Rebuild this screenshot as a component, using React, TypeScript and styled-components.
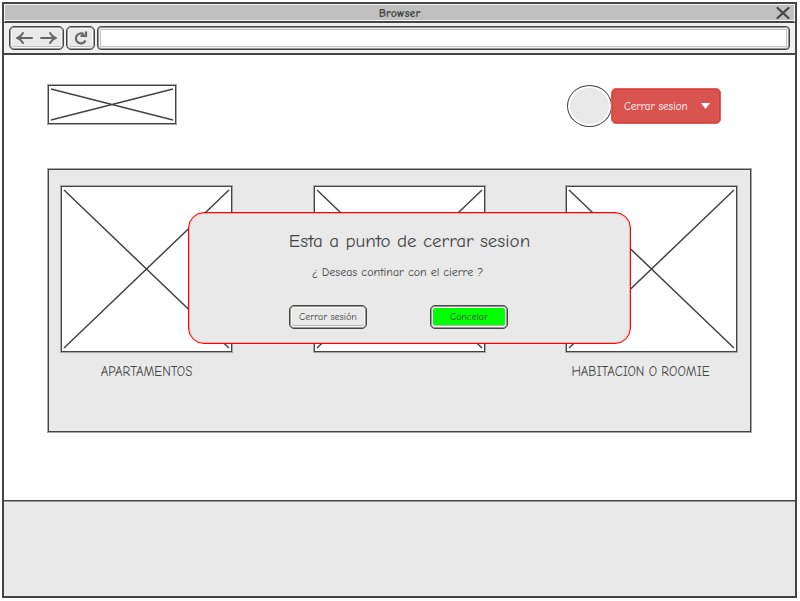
import React from "react";
import styled, { createGlobalStyle } from "styled-components";

const ink = "#444444";
const fill = "#e9e9e9";

const GlobalStyle = createGlobalStyle`
  *, *::before, *::after { box-sizing: border-box; }
  body { margin: 0; background: #ffffff; }
  body, button, input, select {
    font-family: "Comic Sans MS", "Comic Neue", "Noto Sans", sans-serif;
    color: ${ink};
  }
`;

const Frame = styled.div`
  display: flex;
  flex-direction: column;
  min-height: calc(100vh - 5px);
  margin: 2px 3px 3px 2px;
  border: 2px solid ${ink};
  background: #ffffff;
`;

const TitleBar = styled.header`
  display: grid;
  grid-template-columns: 20px 1fr 20px;
  align-items: center;
  height: 19px;
  border: 1px solid #f2f2f2;
  border-bottom: 2px solid ${ink};
  background: #c0c0c0;
  box-shadow: inset 0 -1px #f2f2f2;
`;

const WindowTitle = styled.h1`
  grid-column: 2;
  margin: 0;
  font-size: 12px;
  line-height: 16px;
  font-weight: 600;
  text-align: center;
`;

const CloseButton = styled.button`
  display: flex;
  padding: 0 0 0 2px;
  border: 0;
  background: none;
`;

const Toolbar = styled.nav`
  display: flex;
  align-items: center;
  gap: 2px;
  height: 32px;
  padding: 0 5px;
  border-bottom: 2px solid ${ink};
  background: #f0f0f0;
`;

const ToolGroup = styled.div<{ $width: number }>`
  display: flex;
  align-items: center;
  justify-content: space-evenly;
  width: ${(p) => p.$width}px;
  height: 24px;
  border: 1px solid ${ink};
  border-radius: 5px;
  background: ${fill};
  box-shadow: inset 0 0 0 1px #999999, inset 0 0 0 2px #f8f8f8, inset 0 -3px #bdbdbd;
`;

const ToolButton = styled.button`
  display: flex;
  padding: 0;
  border: 0;
  background: none;
`;

const Address = styled.input`
  flex: 1;
  min-width: 0;
  height: 24px;
  padding: 0 8px;
  border: 1px solid ${ink};
  border-radius: 4px;
  outline: 0;
  background: #ffffff;
  box-shadow: inset 0 0 0 1px #999999, inset 0 0 0 2px #eeeeee, inset 0 0 0 3px #c4c4c4;
  font-size: 12px;
`;

const Page = styled.main`
  flex: 1;
  padding: 30px 44px 68px;
`;

const PageHeader = styled.div`
  display: flex;
  align-items: flex-start;
  justify-content: space-between;
  padding-right: 30px;
`;

const Placeholder = styled.svg<{ $width: number; $height: number }>`
  display: block;
  width: ${(p) => p.$width}px;
  height: ${(p) => p.$height}px;
  border: 1px solid ${ink};
  outline: 1px solid #a8a8a8;
  background: #ffffff;
`;

const Account = styled.div`
  display: flex;
  align-items: center;
`;

const Avatar = styled.div`
  width: 45px;
  height: 42px;
  border: 1px solid ${ink};
  border-radius: 50%;
  background: ${fill};
  box-shadow: inset 0 0 0 2px #ffffff;
`;

const MenuField = styled.label`
  display: grid;
  align-items: center;
  width: 110px;
  height: 36px;
  margin-left: -1px;
`;

const MenuSelect = styled.select`
  grid-area: 1 / 1;
  appearance: none;
  width: 100%;
  height: 100%;
  padding: 0 24px 0 12px;
  border: 1px solid #e4605b;
  border-radius: 5px;
  background: #d9534f;
  box-shadow: inset 0 0 0 1px #d43f3a;
  color: #ffffff;
  font-size: 11px;
`;

const MenuArrow = styled.svg`
  grid-area: 1 / 1;
  justify-self: end;
  margin-right: 11px;
  pointer-events: none;
`;

const Panel = styled.section`
  position: relative;
  display: flex;
  justify-content: space-between;
  min-height: 263px;
  margin-top: 42px;
  padding: 16px 13px 48px 12px;
  border: 1px solid ${ink};
  outline: 1px solid #a8a8a8;
  background: ${fill};
`;

const Card = styled.figure`
  margin: 0;
`;

const Caption = styled.figcaption<{ $shift?: number }>`
  padding-right: ${(p) => p.$shift ?? 0}px;
  margin-top: 12px;
  font-size: 13px;
  line-height: 16px;
  text-align: center;
  white-space: nowrap;
`;

const Dialog = styled.div`
  position: absolute;
  top: 42px;
  left: 139px;
  right: 119px;
  display: flex;
  flex-direction: column;
  align-items: center;
  height: 132px;
  padding-top: 12px;
  border: 1px solid #ff0000;
  box-shadow: inset 0 0 0 1px #ff000040;
  border-radius: 16px;
  background: ${fill};
`;

const DialogTitle = styled.h2`
  margin: 0;
  font-size: 19px;
  line-height: 32px;
  font-weight: 400;
`;

const DialogText = styled.p`
  margin: 6px 24px 0 0;
  font-size: 12px;
  line-height: 18px;
`;

const DialogActions = styled.div`
  display: flex;
  gap: 63px;
  margin: 24px 22px 0 0;
`;

const ActionButton = styled.button<{ $primary?: boolean }>`
  width: 78px;
  height: 24px;
  padding: 0;
  border: 1px solid ${ink};
  border-radius: 5px;
  background: ${(p) => (p.$primary ? "#00ff00" : fill)};
  box-shadow: inset 0 0 0 1px #999999, inset 0 0 0 2px #f8f8f8, inset 0 -3px #b5b5b5;
  font-size: 10px;
  line-height: 16px;
`;

const PageFooter = styled.footer`
  height: 96px;
  border-top: 1px solid ${ink};
  background: ${fill};
  box-shadow: inset 0 1px #999999;
`;

function CrossedBox({ width, height }: { width: number; height: number }) {
  return (
    <Placeholder
      $width={width}
      $height={height}
      viewBox={`0 0 ${width - 2} ${height - 2}`}
      stroke={ink}
      strokeWidth="1.5"
      aria-hidden="true"
    >
      <path d={`M2 3 L${width - 4} ${height - 5} M${width - 4} 3 L2 ${height - 5}`} />
    </Placeholder>
  );
}

export default function App() {
  return (
    <>
      <GlobalStyle />
      <Frame>
        <TitleBar>
          <WindowTitle>Browser</WindowTitle>
          <CloseButton aria-label="Close">
            <svg width="14" height="14" viewBox="0 0 14 14" stroke={ink} strokeWidth="2.2" strokeLinecap="round">
              <path d="M1.5 2 L12.5 12 M12.5 2 L1.5 12" />
            </svg>
          </CloseButton>
        </TitleBar>
        <Toolbar>
          <ToolGroup $width={55}>
            <ToolButton aria-label="Back">
              <svg width="18" height="14" viewBox="0 0 18 14" fill="none" stroke="#666" strokeWidth="2" strokeLinecap="round">
                <path d="M16 7 H2 M7 2 Q5 5.5 1.5 7 Q5 8.5 7 12" />
              </svg>
            </ToolButton>
            <ToolButton aria-label="Forward">
              <svg width="18" height="14" viewBox="0 0 18 14" fill="none" stroke="#666" strokeWidth="2" strokeLinecap="round">
                <path d="M2 7 H16 M11 2 Q13 5.5 16.5 7 Q13 8.5 11 12" />
              </svg>
            </ToolButton>
          </ToolGroup>
          <ToolGroup $width={29}>
            <ToolButton aria-label="Reload">
              <svg width="14" height="16" viewBox="0 0 14 16" fill="none" stroke="#666" strokeWidth="2.2">
                <path d="M11.5 10.5 A5 5 0 1 1 10 4.5 M12 1.5 V6 H6.5" />
              </svg>
            </ToolButton>
          </ToolGroup>
          <Address type="text" aria-label="Address" />
        </Toolbar>
        <Page>
          <PageHeader>
            <CrossedBox width={128} height={39} />
            <Account>
              <Avatar />
              <MenuField>
                <MenuSelect aria-label="Cuenta">
                  <option>Cerrar sesion</option>
                </MenuSelect>
                <MenuArrow width="9" height="6" viewBox="0 0 9 6" fill="#fff" aria-hidden="true">
                  <path d="M0 0 H9 L4.5 6 Z" />
                </MenuArrow>
              </MenuField>
            </Account>
          </PageHeader>
          <Panel>
            <Card>
              <CrossedBox width={171} height={166} />
              <Caption>APARTAMENTOS</Caption>
            </Card>
            <Card>
              <CrossedBox width={171} height={166} />
            </Card>
            <Card>
              <CrossedBox width={171} height={166} />
              <Caption $shift={22}>HABITACION O ROOMIE</Caption>
            </Card>
            <Dialog role="dialog" aria-labelledby="dialog-title">
              <DialogTitle id="dialog-title">Esta a punto de cerrar sesion</DialogTitle>
              <DialogText>¿ Deseas continar con el cierre ?</DialogText>
              <DialogActions>
                <ActionButton>Cerrar sesión</ActionButton>
                <ActionButton $primary>Cancelar</ActionButton>
              </DialogActions>
            </Dialog>
          </Panel>
        </Page>
        <PageFooter />
      </Frame>
    </>
  );
}
